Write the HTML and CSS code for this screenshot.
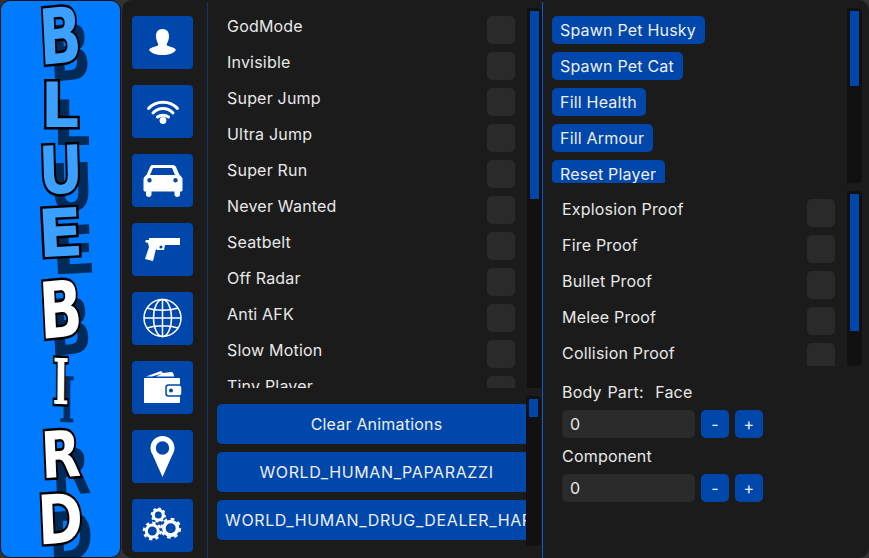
FILE: index.html
```html
<!DOCTYPE html>
<html>
<head>
    <title>BlueBird</title>
    <link rel="stylesheet" href="styles.css">
</head>
<body>
    <div class="menu">
        <div class="logo">
            <span class="l1">B</span>
            <span class="l2">L</span>
            <span class="l3">U</span>
            <span class="l4">E</span>
            <span class="l5 white">B</span>
            <span class="l6 white">I</span>
            <span class="l7 white">R</span>
            <span class="l8 white">D</span>
        </div>

        <div class="panel">
            <div class="tabs">
                <div class="tab">
                    <svg viewBox="0 0 61 53" width="61" height="53"><path fill="#fff" d="M30.500 13c4.500 0 6.500 3 6.500 7 0 3-1 5.500-2 7.500-.5 1-.3 2 1 2.500 3 1 7 1.500 8 4-2 3-7 5-13.500 5s-11.500-2-13.500-5c1-2.500 5-3 8-4 1.300-.5 1.500-1.500 1-2.500-1-2-2-4.500-2-7.500 0-4 2-7 6.500-7z"/></svg>
                </div>
                <div class="tab">
                    <svg viewBox="0 0 61 53" width="61" height="53"><g fill="none" stroke="#fff" stroke-width="3" stroke-linecap="round"><path d="M16.500 23.500C24 15 38 15 45.500 23.500"/><path d="M21 28C26.500 22 35.500 22 41 28"/><path d="M25.500 32C28.500 29.500 33.500 29.500 36.500 32"/></g><circle cx="31" cy="35.500" r="3.400" fill="#fff"/></svg>
                </div>
                <div class="tab">
                    <svg viewBox="0 0 61 53" width="61" height="53"><path transform="translate(0 -2)" fill="#fff" fill-rule="evenodd" d="M20 13h21c1.500 0 2.500 1 3 2l3.500 8c1.500 1 3 2.500 3 4.500V38c0 .8-.5 1.500-1.500 1.500h-1v3c0 1.500-1.200 2.500-2.800 2.500s-2.700-1-2.700-2.500v-3H19.500v3c0 1.500-1.200 2.500-2.800 2.500S14 44 14 42.500v-3h-1c-1 0-1.500-.7-1.500-1.500V27.500c0-2 1.500-3.500 3-4.500L18 15c.5-1 1-2 2-2zM21 16l-3 7h25l-3-7zM17.500 26a2.200 2.200 0 1 0 0 4.400 2.200 2.200 0 0 0 0-4.400zM43.500 26a2.200 2.200 0 1 0 0 4.400 2.200 2.200 0 0 0 0-4.400z"/></svg>
                </div>
                <div class="tab">
                    <svg viewBox="0 0 61 53" width="61" height="53"><path fill="#fff" fill-rule="evenodd" d="M17 15H48V22H33L32 27H25L24 26L21 38L13 36L17 24L16 20L13 19L14 17H17zM29 22.400a1.600 1.600 0 1 0 0 3.200 1.600 1.600 0 0 0 0-3.200z"/></svg>
                </div>
                <div class="tab">
                    <svg viewBox="0 0 61 53" width="61" height="53"><g fill="none" stroke="#fff" stroke-width="1.500"><circle cx="30.500" cy="26" r="18.500"/><ellipse cx="30.500" cy="26" rx="9" ry="18.500"/><path d="M30.500 7.500v37M12 26h37M15 16c9 3 22 3 31 0M15 36c9-3 22-3 31 0"/></g></svg>
                </div>
                <div class="tab">
                    <svg viewBox="0 0 61 53" width="61" height="53"><path fill="#fff" d="M14 15.500L29 10L31 12L39 11C41 11 42 13 42 15.500H24L30 12.500L20 15.500zM12 17H47C47.600 17 48 17.400 48 18V41C48 41.600 47.600 42 47 42H12z"/><rect x="34" y="24" width="16" height="11" rx="2.500" fill="#fff" stroke="#0047ab" stroke-width="1.500"/><circle cx="39" cy="29.500" r="2" fill="#0047ab"/></svg>
                </div>
                <div class="tab">
                    <svg viewBox="0 0 61 53" width="61" height="53"><path fill="#fff" fill-rule="evenodd" d="M30.500 6c6.800 0 12 5.200 12 12 0 2.500-.8 4.500-2 6.500L30.500 47l-10-22.500c-1.200-2-2-4-2-6.500 0-6.800 5.200-12 12-12zM30.500 11.300a6.700 6.700 0 1 0 0 13.400 6.700 6.700 0 0 0 0-13.400z"/></svg>
                </div>
                <div class="tab">
                    <svg viewBox="0 0 61 53" width="61" height="53"><g fill="none" stroke="#fff"><circle cx="26.300" cy="16" r="5" stroke-width="3"/><circle cx="26.300" cy="16" r="6.800" stroke-width="1.600" pathLength="16" stroke-dasharray="1 1"/><circle cx="20.300" cy="32" r="6" stroke-width="3"/><circle cx="20.300" cy="32" r="8.300" stroke-width="2.400" pathLength="16" stroke-dasharray="1 1"/><circle cx="38.700" cy="29.300" r="6.800" stroke-width="3.600"/><circle cx="38.700" cy="29.300" r="9.400" stroke-width="2.200" pathLength="16" stroke-dasharray="1 1"/></g></svg>
                </div>
            </div>

            <div class="middle">
                <div class="scrollbox list-box">
                    <div class="scroll-inner list">
                        <div class="row"><span>GodMode</span><i class="check"></i></div>
                        <div class="row"><span>Invisible</span><i class="check"></i></div>
                        <div class="row"><span>Super Jump</span><i class="check"></i></div>
                        <div class="row"><span>Ultra Jump</span><i class="check"></i></div>
                        <div class="row"><span>Super Run</span><i class="check"></i></div>
                        <div class="row"><span>Never Wanted</span><i class="check"></i></div>
                        <div class="row"><span>Seatbelt</span><i class="check"></i></div>
                        <div class="row"><span>Off Radar</span><i class="check"></i></div>
                        <div class="row"><span>Anti AFK</span><i class="check"></i></div>
                        <div class="row"><span>Slow Motion</span><i class="check"></i></div>
                        <div class="row"><span>Tiny Player</span><i class="check"></i></div>
                    </div>
                    <div class="track"><div class="thumb thumb-main"></div></div>
                </div>
                <div class="scrollbox anim-box">
                    <div class="scroll-inner anims">
                        <button class="wide">Clear Animations</button>
                        <button class="wide caps">WORLD_HUMAN_PAPARAZZI</button>
                        <button class="wide caps">WORLD_HUMAN_DRUG_DEALER_HARD</button>
                    </div>
                    <div class="track"><div class="thumb thumb-anim"></div></div>
                </div>
            </div>

            <div class="right">
                <div class="scrollbox actions-box">
                    <div class="scroll-inner actions">
                        <button class="small">Spawn Pet Husky</button>
                        <button class="small">Spawn Pet Cat</button>
                        <button class="small">Fill Health</button>
                        <button class="small">Fill Armour</button>
                        <button class="small">Reset Player</button>
                    </div>
                    <div class="track"><div class="thumb thumb-actions"></div></div>
                </div>
                <div class="scrollbox proofs-box">
                    <div class="scroll-inner list">
                        <div class="row"><span>Explosion Proof</span><i class="check"></i></div>
                        <div class="row"><span>Fire Proof</span><i class="check"></i></div>
                        <div class="row"><span>Bullet Proof</span><i class="check"></i></div>
                        <div class="row"><span>Melee Proof</span><i class="check"></i></div>
                        <div class="row"><span>Collision Proof</span><i class="check"></i></div>
                    </div>
                    <div class="track"><div class="thumb thumb-proofs"></div></div>
                </div>
                <div class="clothes">
                    <p class="label">Body Part:&nbsp; Face</p>
                    <div class="stepper">
                        <div class="value">0</div>
                        <button class="step">-</button>
                        <button class="step">+</button>
                    </div>
                    <p class="label">Component</p>
                    <div class="stepper">
                        <div class="value">0</div>
                        <button class="step">-</button>
                        <button class="step">+</button>
                    </div>
                </div>
            </div>
        </div>
    </div>
</body>
</html>
```

FILE: styles.css
```css
* {
    box-sizing: border-box;
}

body {
    margin: 0;
    height: 558px;
    overflow: hidden;
    background-color: #333;
    font-family: 'Inter', sans-serif;
    font-size: 16px;
    letter-spacing: 0.2px;
    color: #e8e8e8;
}

.menu {
    display: flex;
    height: 558px;
    gap: 1px;
}

/* logo */
.logo {
    width: 121px;
    flex: none;
    display: flex;
    flex-direction: column;
    align-items: center;
    background-color: #007bff;
    border-radius: 10px;
    border: 1px solid #111;
    padding-top: 2px;
    font-family: 'DejaVu Sans', sans-serif;
    font-weight: bold;
    line-height: 68px;
    letter-spacing: 0;
    color: #3ba0ff;
}

.logo span {
    display: block;
    -webkit-text-stroke: 5px #000;
    paint-order: stroke fill;
    text-shadow: 12px 18px 0 rgba(0, 0, 0, 0.65);
}

.logo .white {
    color: #fff;
}

.logo .l1 { height: 69px; font-size: 77px; transform: scaleX(0.72) rotate(-4deg); }
.logo .l2 { height: 65px; font-size: 63px; transform: scaleX(0.95); }
.logo .l3 { height: 63px; font-size: 66px; transform: scaleX(0.82) rotate(-2deg); }
.logo .l4 { height: 76px; font-size: 66px; transform: scaleX(1) rotate(-3deg); }
.logo .l5 { height: 72px; font-size: 78px; transform: scaleX(0.72) rotate(-4deg); }
.logo .l6 { height: 73px; font-size: 63px; font-family: 'DejaVu Serif', serif; transform: scaleX(0.55) rotate(1deg); }
.logo .l7 { height: 65px; font-size: 64px; transform: scaleX(0.8) rotate(-3deg); }
.logo .l8 { height: 60px; font-size: 68px; transform: scaleX(0.8) rotate(-3deg); }

/* main panel */
.panel {
    flex: 1;
    display: flex;
    background-color: #1b1b1b;
    border-radius: 10px;
    min-width: 0;
}

.tabs {
    width: 86px;
    flex: none;
    display: flex;
    flex-direction: column;
    gap: 16px;
    margin-top: 2px;
    padding: 14px 0 0 10px;
    border-right: 1px solid #10366e;
}

.tab {
    width: 61px;
    height: 53px;
    flex: none;
    background-color: #0047ab;
    border-radius: 4px;
}

.tab svg {
    display: block;
}

.middle {
    width: 335px;
    flex: none;
    margin-top: 2px;
    padding: 6px 0 0 9px;
    border-right: 1px solid #0b5cc4;
}

.right {
    flex: 1;
    margin-top: 2px;
    padding: 6px 0 0 9px;
    min-width: 0;
}

/* scrolling boxes */
.scrollbox {
    position: relative;
    overflow: hidden;
    border-radius: 4px;
}

.scroll-inner {
    overflow: hidden;
    height: 100%;
}

.track {
    position: absolute;
    top: 0;
    right: 0;
    bottom: 0;
    width: 15px;
    padding: 3px;
    background-color: #111;
    border-radius: 0 4px 4px 0;
}

.thumb {
    background-color: #0047ab;
}

.thumb-main { height: 188px; }
.thumb-anim { height: 18px; }
.thumb-actions { height: 75px; }
.thumb-proofs { height: 137px; }

.list-box {
    height: 380px;
    width: 325px;
}

.list {
    padding-right: 27px;
}

.row {
    display: flex;
    justify-content: space-between;
    align-items: flex-start;
    height: 36px;
    padding: 8px 0 0 10px;
    line-height: 20px;
}

.check {
    display: block;
    width: 28px;
    height: 28px;
    background-color: #2a2a2a;
    border-radius: 5px;
}

.anim-box {
    height: 150px;
    margin-top: 8px;
    width: 324px;
}

.anims {
    display: flex;
    flex-direction: column;
    gap: 8px;
    padding-top: 8px;
}

button {
    font-family: inherit;
    font-size: 16px;
    letter-spacing: inherit;
    color: #eee;
    background-color: #0047ab;
    border: none;
    border-radius: 5px;
    padding: 0;
    white-space: nowrap;
    overflow: hidden;
}

.wide {
    width: 319px;
    height: 40px;
    flex: none;
    padding: 0 8px;
    text-align: center;
}

.caps {
    letter-spacing: 0.62px;
}

/* right column */
.actions-box {
    height: 175px;
    width: 310px;
}

.actions {
    display: flex;
    flex-direction: column;
    align-items: flex-start;
    gap: 8px;
    padding-top: 8px;
}

.small {
    height: 28px;
    flex: none;
    padding: 0 9px 0 8px;
}

.proofs-box {
    height: 175px;
    margin-top: 8px;
    width: 310px;
}

.clothes {
    padding: 16px 0 0 10px;
}

.label {
    margin: 0;
    height: 20px;
    line-height: 20px;
    word-spacing: 1px;
}

.stepper {
    display: flex;
    gap: 6px;
    margin: 8px 0;
    height: 28px;
}

.value {
    width: 133px;
    background-color: #2a2a2a;
    border-radius: 5px;
    padding-left: 8px;
    line-height: 28px;
}

.step {
    width: 28px;
    height: 28px;
}
```
